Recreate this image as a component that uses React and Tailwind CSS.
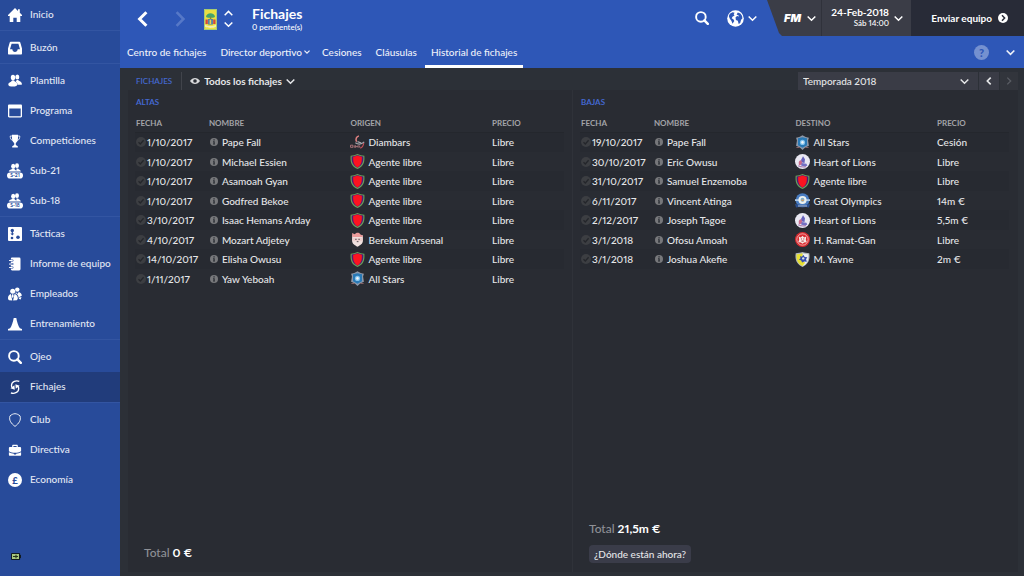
import React from "react";

const svgProps = { viewBox: "0 0 14 14", fill: "currentColor", "aria-hidden": true };

const People = () => (
  <>
    <ellipse cx="9.3" cy="3" rx="2" ry="2.5" />
    <path d="M8.6 6h1.6c.4 1 3 1.3 3.6 3.2v1.6H9.5C9.6 9 8.3 8.2 7.6 7.8c.6-.4.9-1 1-1.8z" />
    <ellipse cx="5" cy="3.6" rx="2.2" ry="2.8" />
    <path d="M3.9 6.600h2.300c.4 1.400 3 1.700 3.200 3.600.1 1.600-1.900 2.300-4.400 2.300S.200 12 .3 10.400c.2-2 3.200-2.200 3.600-3.800z" />
  </>
);

const Squad = ({ label }) => (
  <svg viewBox="0 0 16 16" fill="currentColor" className="h-4 w-4" aria-hidden="true">
    <ellipse cx="10" cy="2.700" rx="2" ry="2.400" />
    <ellipse cx="6.200" cy="3.300" rx="2.100" ry="2.500" />
    <path d="M5.300 5.600h2c.3 1.200 1.200 1.500 2 2 .4-.7.200-1.600.1-2.200h1.700c.4 1.200 2.700 1.400 2.800 3.200H1.800c.2-1.900 3-1.600 3.500-3z" />
    <rect x="0" y="9.400" width="16" height="6.200" rx="3.100" />
    <text x="8" y="14.300" textAnchor="middle" fontSize="5" fontWeight="700" fill="#284b9a">{label}</text>
  </svg>
);

const icons = {
  home: (
    <svg {...svgProps} className="h-[14px] w-[14px]">
      <path d="M7 0l3 2.900V1.300h1.800v3.400L14 7v.9h-1.700V14H8.700V9.700H5.300V14H1.700V7.900H0V7z" />
    </svg>
  ),
  inbox: (
    <svg {...svgProps} className="h-[14px] w-[14px]">
      <path fillRule="evenodd" d="M2.700.7h8.600c.5 0 .9.3 1 .8L14 7.600v4.900c0 .6-.4 1-1 1H1c-.6 0-1-.4-1-1V7.600l1.700-6.100c.1-.5.5-.8 1-.8zM3.600 2.700L2 8.300h2.300c.3 1.800 1.200 2.700 2.700 2.700s2.400-.9 2.700-2.700H12l-1.600-5.600z" />
    </svg>
  ),
  squad: (
    <svg {...svgProps} className="h-[14px] w-[14px]"><People /></svg>
  ),
  calendar: (
    <svg {...svgProps} className="h-[14px] w-[14px]">
      <path fillRule="evenodd" d="M1.200.5h11.600c.7 0 1.200.5 1.200 1.200v10.600c0 .7-.5 1.200-1.200 1.200H1.200c-.7 0-1.200-.5-1.200-1.200V1.700C0 1 .5.500 1.200.5zM1.300 4.500v7.700h11.400V4.500z" />
    </svg>
  ),
  trophy: (
    <svg {...svgProps} className="h-[14px] w-[14px]">
      <path d="M4 .8h6v3.500C10 6.800 8.900 8.300 7.800 9v2l2 1.200v1.300H4.200v-1.300l2-1.200V9C5.100 8.300 4 6.800 4 4.300z" />
      <path d="M4 2H2.200c0 2.500.8 4 2.500 4.600M10 2h1.800c0 2.500-.8 4-2.500 4.600" fill="none" stroke="currentColor" strokeWidth=".8" />
    </svg>
  ),
  s21: <Squad label="S-21" />,
  s18: <Squad label="S-18" />,
  tactics: (
    <svg {...svgProps} className="h-[14px] w-[14px]">
      <rect width="14" height="14" rx="1" />
      <g fill="#284b9a">
        <circle cx="4.300" cy="3.500" r="1.700" />
        <path d="M3.700 5h1.200v1.400h1.300L4.300 8.600 2.400 6.400h1.300z" />
        <circle cx="4" cy="11" r="1.300" />
        <circle cx="10" cy="10.300" r="1.800" />
      </g>
    </svg>
  ),
  notebook: (
    <svg {...svgProps} className="h-[14px] w-[14px]">
      <rect x="2.800" y=".6" width="9.700" height="12.800" rx="1.300" />
      <g fill="none" strokeLinecap="round">
        <path d="M2 3.500h2.500M2 7h2.500M2 10.500h2.500" stroke="#284b9a" strokeWidth="2" />
        <path d="M1.500 3.500h2.800M1.500 7h2.800M1.500 10.500h2.800" stroke="currentColor" strokeWidth="1.100" />
      </g>
    </svg>
  ),
  staff: (
    <svg {...svgProps} className="h-[14px] w-[14px]">
      <circle cx="9.300" cy="2.600" r="2.200" />
      <path d="M7.900 5l1.400 2 1.500-2c1.500.6 3 1.500 3 3.800l-3.300 1.800c0-2-1.200-3.400-3-4z" />
      <circle cx="4.700" cy="4.200" r="2.500" />
      <path d="M2.900 6.900L4.300 13.500 1 13.200C.3 12.800 0 12 0 11c0-2.300 1.300-3.500 2.900-4.100zM6.500 6.900c2 .6 3.300 2 3.300 4.100 0 1-.3 1.800-1 2.200l-3.700.3zM4.100 7.300h1.200l.4 2-1 2-1-2zM10.500 10.700l3-.8-.8 2.700-1.500-.5z" />
    </svg>
  ),
  cone: (
    <svg {...svgProps} className="h-[14px] w-[14px]">
      <path d="M5.700 1h2.600c.6 3.700 1.900 7.800 3.600 10.300l2.100.8v1.400H0v-1.400l2.100-.8C3.800 8.800 5.100 4.700 5.700 1z" />
    </svg>
  ),
  search: (
    <svg {...svgProps} className="h-[14px] w-[14px]">
      <g fill="none" stroke="currentColor">
        <circle cx="5.900" cy="5.900" r="4.800" strokeWidth="1.900" />
        <path d="M9.400 9.400l3.400 3.400" strokeWidth="2.500" strokeLinecap="round" />
      </g>
    </svg>
  ),
  transfer: (
    <svg {...svgProps} className="h-[14px] w-[14px]">
      <path d="M11.300 1.400C8.300-.1 3.700 1.500 3.500 5.300c0 1 .1 1.500.5 2.200M2.900 12.800c3 1.300 7.700-.3 7.800-4.100 0-1-.1-1.600-.5-2.300" fill="none" stroke="currentColor" strokeWidth="1.300" />
      <path d="M2.500 8.300l4.300 1.400L6.400 5.200zM11.700 5.700L7.400 4.300l.4 4.500z" />
    </svg>
  ),
  shield: (
    <svg {...svgProps} className="h-[14px] w-[14px]">
      <path d="M7 .7c1.900.1 3.500.9 5 2.200 1.400 4.200-1.200 7.700-5 10.500C3.200 10.600.6 7.100 2 2.900 3.500 1.600 5.100.8 7 .7z" fill="none" stroke="currentColor" strokeWidth=".9" />
    </svg>
  ),
  briefcase: (
    <svg {...svgProps} className="h-[14px] w-[14px]">
      <path fillRule="evenodd" d="M4.200 4V2.800c0-.6.400-1 1-1h3.600c.6 0 1 .4 1 1V4h2.400c.5 0 .9.400.9.900v3.300C9.500 10.400 4.500 10.400.9 8.200V4.900c0-.5.4-.9.900-.9zM5.400 3v1h3.200V3z" />
      <path d="M.9 9.300c1.600.9 3.300 1.400 5 1.500v.8h2.200v-.8c1.700-.1 3.400-.6 5-1.500v2.500c0 .6-.4 1-1 1H1.900c-.6 0-1-.4-1-1z" />
    </svg>
  ),
  pound: (
    <svg {...svgProps} className="h-[14px] w-[14px]">
      <circle cx="7" cy="7" r="7" />
      <text x="7" y="10.500" textAnchor="middle" fontSize="9.500" fontWeight="900" fill="#284b9a">£</text>
    </svg>
  ),
};

const menu = [
  [["home", "Inicio"]],
  [["inbox", "Buzón"]],
  [["squad", "Plantilla"], ["calendar", "Programa"], ["trophy", "Competiciones"], ["s21", "Sub-21"], ["s18", "Sub-18"]],
  [["tactics", "Tácticas"], ["notebook", "Informe de equipo"], ["staff", "Empleados"], ["cone", "Entrenamiento"]],
  [["search", "Ojeo"], ["transfer", "Fichajes"]],
  [["shield", "Club"], ["briefcase", "Directiva"], ["pound", "Economía"]],
];

function Chevron({ dir = "down", className = "h-2 w-2", width = 1.6 }) {
  const paths = {
    down: "M.6 2.200L4 5.600l3.400-3.400",
    up: "M.6 5.500L4 2.100l3.400 3.400",
    left: "M5.700.6L2.300 4l3.400 3.400",
    right: "M2.300.6L5.700 4 2.300 7.400",
  };
  return (
    <svg viewBox="0 0 8 8" className={className} fill="none" stroke="currentColor" strokeWidth={width} aria-hidden="true">
      <path d={paths[dir]} />
    </svg>
  );
}

const crests = {
  free: (
    <>
      <path d="M7 0c2 .9 4.200 1.400 6.400 1.600C13.900 7.500 12.800 11.500 7 14 1.200 11.500.1 7.500.6 1.600 2.800 1.400 5 .9 7 0z" fill="#6aa05a" />
      <path d="M7 1c1.800.8 3.600 1.200 5.400 1.400.3 5-.8 8.300-5.400 10.500C2.400 10.700 1.300 7.400 1.600 2.400 3.400 2.200 5.200 1.800 7 1z" fill="#4c1a78" />
      <path d="M7 1.400c1.300.6 2.700 1 4 1.200.3 4.800-.4 7.800-4 9.900-3.600-2.100-4.300-5.100-4-9.900 1.300-.2 2.700-.6 4-1.200z" fill="#fb1420" />
    </>
  ),
  diambars: (
    <>
      <path d="M8.300.8C6 1.500 4.800 4 6.200 6.300" fill="none" stroke="#e08282" strokeWidth="1.400" />
      <path d="M5 7.300c2.500 1.600 6 1.300 8.300-.9M7 6.200l3.500 1.300" fill="none" stroke="#a9abb2" strokeWidth="1.100" />
      <path d="M12.800 7.500c-.3 2.600-1.500 4.300-3.300 4.800" fill="none" stroke="#c05058" strokeWidth="1.100" />
      <path d="M.5 9.500h2.200v2H.5zM4 9.700v2.200M5.200 11.900V9.800l1.200 1.500 1.200-1.500v2.100M9 9.800v2" fill="none" stroke="#b77a80" strokeWidth=".8" />
    </>
  ),
  berekum: (
    <>
      <path d="M2 3c3 .8 7 .8 10 0v5.500c0 2.600-2.400 4-5 5.300-2.600-1.300-5-2.700-5-5.300z" fill="#f0e1df" />
      <path d="M2 4.600V1l2.400 1.200C5.500.200 8.500.200 9.500 2L12 3.400v1.200z" fill="#eb9b9b" />
      <path d="M2.300 5.500h9.400v3H2.300z" fill="#ecd0cf" />
      <path d="M4.800 6.800h1.400M7.800 6.800h1.400M6.300 9h1.600" stroke="#55484e" strokeWidth=".9" />
    </>
  ),
  stars: (
    <>
      <path d="M1 2.500L4 1.800 7 .2l3 1.600 3 .7-.8 2.600.8 5-3.500 1.500L7 13.900l-2.500-2.300L1 10.100l.8-5z" fill="#8d98a9" />
      <path d="M2.800 3L7 2l4.200 1v6.500L7 12 2.800 9.500z" fill="#2979b5" />
      <circle cx="7" cy="6.900" r="2.400" fill="#83c3ee" />
      <circle cx="7" cy="6.900" r="1.200" fill="#f1f5f7" />
      <path d="M1.300 11.700h3M9.700 11.700h3" stroke="#846064" strokeWidth="1" />
    </>
  ),
  lions: (
    <>
      <circle cx="7" cy="7" r="7" fill="#e9e8f2" />
      <path d="M7.500 2l1.800 3-.4 3.300-3.600-.5.700-3z" fill="#6661bb" />
      <path d="M3.500 7.500c1.300-2.500 2.600-1.600 3 0l.5 2.300-3.400.6z" fill="#c96a8b" />
      <path d="M6.200 8.500l4.500.5.8 2-3 .7-2.800-1z" fill="#7470c3" />
      <path d="M3 11c2 1 4.500 1.400 7.300.8" fill="none" stroke="#a57caf" strokeWidth="1" />
    </>
  ),
  olympics: (
    <>
      <circle cx="7" cy="6.600" r="6.400" fill="#497cc0" />
      <path d="M0 10.300l3 .4c2.400 1 5.600 1 8 0l3-.4-1 3.300-3-.6c-2 .6-4 .6-6 0l-3 .6z" fill="#294e8e" />
      <path d="M0 5.800h14v1.700H0z" fill="#acc9e6" />
      <circle cx="7" cy="6.500" r="3.800" fill="#eef2ef" />
      <circle cx="7" cy="6.300" r="1.800" fill="#78add4" />
      <path d="M6 6h2.200v1.600H6z" fill="#d4a168" />
      <path d="M2.800 12.100h8.400" stroke="#c8d5e7" strokeWidth=".8" />
    </>
  ),
  ramat: (
    <>
      <circle cx="7" cy="7" r="7" fill="#d92b31" />
      <circle cx="7" cy="7" r="5.300" fill="none" stroke="#f2b9b6" strokeWidth=".8" />
      <path d="M3.500 4.300l2 .8L7 3.500l1.500 1.600 2-.8-.4 3L11 9.500l-2.500.2L7 11 5.500 9.700 3 9.500l.9-2.200z" fill="#f6e8e4" />
      <path d="M5.500 6.500h1M7.700 6.500h1M6 8.500h2.200" stroke="#af343a" strokeWidth=".9" />
    </>
  ),
  yavne: (
    <>
      <path d="M7 0c2 .8 4 1 6.300 1.100C14.300 7 12.500 11.500 7 14 1.500 11.500-.3 7 .7 1.100 3 1 5 .8 7 0z" fill="#b3b9bd" />
      <path d="M7 1.100c1.600.6 3.500.9 5.400 1C13 7 11.500 11 7 13z" fill="#ebeef2" />
      <path d="M7 1.100c-1.600.6-3.500.9-5.400 1C1 7 2.500 11 7 13l2.500-3L7 8z" fill="#e6df35" />
      <path d="M4.800 3.800l1.500.6L8 2.800l1 1.800 2.500.2-1.200 2 .8 2.400-2.500-.4-2 1.100-.8-2L3.600 7l1.500-1z" fill="#334bad" />
      <circle cx="7.700" cy="6" r="1.100" fill="#dce4e5" />
    </>
  ),
};

const arrivals = [
  ["1/10/2017", "Pape Fall", "diambars", "Diambars", "Libre"],
  ["1/10/2017", "Michael Essien", "free", "Agente libre", "Libre"],
  ["1/10/2017", "Asamoah Gyan", "free", "Agente libre", "Libre"],
  ["1/10/2017", "Godfred Bekoe", "free", "Agente libre", "Libre"],
  ["3/10/2017", "Isaac Hemans Arday", "free", "Agente libre", "Libre"],
  ["4/10/2017", "Mozart Adjetey", "berekum", "Berekum Arsenal", "Libre"],
  ["14/10/2017", "Elisha Owusu", "free", "Agente libre", "Libre"],
  ["1/11/2017", "Yaw Yeboah", "stars", "All Stars", "Libre"],
];

const departures = [
  ["19/10/2017", "Pape Fall", "stars", "All Stars", "Cesión"],
  ["30/10/2017", "Eric Owusu", "lions", "Heart of Lions", "Libre"],
  ["31/10/2017", "Samuel Enzemoba", "free", "Agente libre", "Libre"],
  ["6/11/2017", "Vincent Atinga", "olympics", "Great Olympics", "14m €"],
  ["2/12/2017", "Joseph Tagoe", "lions", "Heart of Lions", "5,5m €"],
  ["3/1/2018", "Ofosu Amoah", "ramat", "H. Ramat-Gan", "Libre"],
  ["3/1/2018", "Joshua Akefie", "yavne", "M. Yavne", "2m €"],
];

function TransferTable({ title, place, rows }) {
  return (
    <>
      <h2 className="pl-px text-[8px] font-bold leading-4 text-[#4468d0]">{title}</h2>
      <table className="mt-1 w-full table-fixed border-collapse text-left">
        <thead>
          <tr className="h-[18px] border-b border-[#24272d] text-[8px] text-[#a3a4a8]">
            <th className="w-[17%] p-0 pl-px font-bold">FECHA</th>
            <th className="w-[33%] p-0 pl-px font-bold">NOMBRE</th>
            <th className="w-[33%] p-0 pl-px font-bold">{place}</th>
            <th className="w-[17%] p-0 pl-px font-bold">PRECIO</th>
          </tr>
        </thead>
        <tbody className="text-[10px] leading-4 text-[#e6e7e9]">
          {rows.map(([date, name, crest, club, price], i) => (
            <tr key={i} className="odd:h-5 odd:bg-[#272a31] even:h-[19px]">
              <td className="p-0 pl-px">
                <span className="flex items-center gap-px">
                  <svg viewBox="0 0 10 10" className="h-[10px] w-[10px] shrink-0" aria-hidden="true">
                    <circle cx="5" cy="5" r="5" fill="#3c3e42" />
                    <path d="M2.500 5.200l1.800 1.800 3.300-3.700" fill="none" stroke="#24262b" strokeWidth="1.300" />
                  </svg>
                  {date}
                </span>
              </td>
              <td className="p-0 pl-px">
                <span className="flex items-center gap-1 pl-px">
                  <svg viewBox="0 0 8 8" className="h-2 w-2 shrink-0" aria-hidden="true">
                    <circle cx="4" cy="4" r="4" fill="#77787b" />
                    <path d="M3.400 1.300h1.300v1.200H3.400zM3 3.200h1.700v2.500H5v.9H3v-.9h.4V4.100H3z" fill="#292c33" />
                  </svg>
                  <a href="#jugador">{name}</a>
                </span>
              </td>
              <td className="p-0 pl-px">
                <span className="flex items-center gap-[3px]">
                  <svg viewBox="0 0 14 14" className="h-[15px] w-[15px] shrink-0" aria-hidden="true">{crests[crest]}</svg>
                  <a href="#club">{club}</a>
                </span>
              </td>
              <td className="p-0 pl-px">{price}</td>
            </tr>
          ))}
        </tbody>
      </table>
    </>
  );
}

function Sidebar() {
  return (
    <nav className="flex w-[120px] shrink-0 flex-col bg-[#284b9a] text-[10px] text-[#e3e8f4]">
      {menu.map((group, i) => (
        <ul key={i} className="mb-[2px] border-b border-[#3355a2] last-of-type:border-0">
          {group.map(([icon, label]) => (
            <li key={label}>
              <a
                href={"#" + icon}
                aria-current={label === "Fichajes" ? "page" : undefined}
                className="flex h-[30px] items-center gap-[7px] pl-[7px] aria-[current=page]:bg-[#213c7b]"
              >
                <span className="flex w-4 justify-center text-white">{icons[icon]}</span>
                <span className="pb-0.5">{label}</span>
              </a>
            </li>
          ))}
        </ul>
      ))}
      <svg viewBox="0 0 10 7" className="mb-4 ml-[11px] mt-auto h-[7px] w-[10px]" aria-hidden="true">
        <rect width="9.200" height="7" rx="1" fill="#121a20" />
        <rect x="9" y="2" width="1" height="3" fill="#121a20" />
        <rect x="1" y="1" width="7" height="5" fill="#a8c77e" />
        <path d="M2 3.500h5M5 1.700v3.600" stroke="#26331c" strokeWidth="1.100" />
      </svg>
    </nav>
  );
}

function Header() {
  return (
    <header className="bg-[#2e57b7] text-white">
      <div className="flex h-9 items-stretch">
        <div className="flex items-center">
          <button aria-label="Atrás" className="ml-[15px] mt-0.5"><Chevron dir="left" className="h-4 w-4" width={1.500} /></button>
          <button aria-label="Adelante" disabled className="ml-[21px] mt-0.5 text-[#5678c7]"><Chevron dir="right" className="h-4 w-4" width={1.300} /></button>
          <svg viewBox="0 0 13 21" className="ml-4 mt-0.5 h-[21px] w-[13px]" aria-hidden="true">
            <rect width="13" height="21" fill="#a8cc72" />
            <rect x="1" y="1" width="11" height="19" fill="#eadf43" />
            <path d="M2 8c.3-5 8.700-5 9 0-2 1.200-3 .4-4.500.4S4 9.200 2 8z" fill="#43a56c" />
            <path d="M5.800 7.500h1.500v4H5.800z" fill="#7e873c" />
            <path d="M1.500 10.500h2.300V15H1.500zM9.200 10.500h2.300V15H9.200z" fill="#d2473f" />
            <path d="M4.200 10h4.600v5.500H4.200z" fill="#326ebf" />
            <path d="M5.500 10.500h1.800V15H5.500z" fill="#e7d44a" />
            <path d="M1 15.500c3 2 8 2 11 0v2.200c-3 1.600-8 1.600-11 0z" fill="#f0efb3" />
          </svg>
          <div className="ml-[7px] mt-0.5 flex flex-col gap-[2px]">
            <button aria-label="Equipo anterior"><Chevron dir="up" className="h-[9px] w-[9px]" width={1.300} /></button>
            <button aria-label="Equipo siguiente"><Chevron className="h-[9px] w-[9px]" width={1.300} /></button>
          </div>
          <div className="ml-[19px] mt-px">
            <h1 className="text-[14px] font-bold leading-4">Fichajes</h1>
            <p className="text-[8px] leading-[10px]">0 pendiente(s)</p>
          </div>
        </div>
        <div className="ml-auto flex items-center">
          <button aria-label="Buscar">{icons.search}</button>
          <button aria-label="Mundo" className="ml-[18px] flex items-center gap-1">
            <svg viewBox="0 0 17 17" className="h-[17px] w-[17px]" aria-hidden="true">
              <circle cx="8.500" cy="8.500" r="8.300" fill="white" />
              <path d="M2.800 3.800L5.600 2.200l2 .6-.9 1.500.8 1.100-2 1.300L4.700 8.200l1.900 1.200.7 1.600-1.800 2.800-1-2.800-1.800-2.400-.9-2.500zM9.600 4.600l1.200-2.200 2.600 1 1.700 2.700.3 2.500-1.300 1.200-.9 3.100-1.500 1.200-.9-3.400-1.900-.8-.4-2.300 1.500-1.500 2.100.4-.5-1.100z" fill="#2e57b7" />
            </svg>
            <Chevron className="h-[9px] w-[9px]" width={1.300} />
          </button>
        </div>
        <div className="ml-[10px] flex items-stretch bg-[#3b3d47] [clip-path:polygon(0_0,100%_0,100%_100%,15px_100%,12px_92%)]">
          <button aria-label="Menú FM" className="flex w-[55px] items-center justify-end gap-[6px] border-r border-[#30323b] pr-[5px]">
            <span className="font-[Inter,sans-serif] text-[11px] font-black italic">FM</span>
            <Chevron className="h-[9px] w-[9px]" width={1.300} />
          </button>
          <button className="flex w-[89px] items-center justify-end gap-[5px] pr-2 text-right">
            <span className="pb-0.5">
              <span className="block text-[10px] font-bold leading-3">24-Feb-2018</span>
              <span className="block text-[8px] font-medium leading-[11px]">Sáb 14:00</span>
            </span>
            <Chevron className="h-[9px] w-[9px]" width={1.300} />
          </button>
          <button className="flex w-[113px] items-center justify-end gap-[6px] bg-[#282b37] pr-4 text-[10px] font-bold">
            Enviar equipo
            <svg viewBox="0 0 10 10" className="h-[10px] w-[10px]" aria-hidden="true">
              <circle cx="5" cy="5" r="5" fill="white" />
              <path d="M4 2.300L6.600 5 4 7.700" fill="none" stroke="#282b37" strokeWidth="1.500" />
            </svg>
          </button>
        </div>
      </div>
      <nav className="flex h-8 items-stretch pl-[7px] text-[10px] text-[#eef1f9]">
        <a href="#centro" className="mr-[14px] flex items-center">Centro de fichajes</a>
        <a href="#director" className="mr-3 flex items-center gap-0.5">Director deportivo <Chevron className="h-[6px] w-[6px]" /></a>
        <a href="#cesiones" className="mr-[14px] flex items-center">Cesiones</a>
        <a href="#clausulas" className="mr-2 flex items-center">Cláusulas</a>
        <a href="#historial" aria-current="page" className="flex items-center border-b-[3px] border-white px-[6px] pt-[3px]">Historial de fichajes</a>
        <button aria-label="Ayuda" className="ml-auto">
          <svg viewBox="0 0 15 15" className="h-[15px] w-[15px]" aria-hidden="true">
            <circle cx="7.500" cy="7.500" r="7.500" fill="#7591d0" />
            <text x="7.500" y="11.500" textAnchor="middle" fontSize="11" fontWeight="900" fill="#2e57b7">?</text>
          </svg>
        </button>
        <button aria-label="Más" className="ml-[17px] mr-[9px]"><Chevron className="h-[9px] w-[9px]" width={1.500} /></button>
      </nav>
    </header>
  );
}

export default function App() {
  return (
    <div className="flex min-h-screen bg-[#2c3037] font-['Lato',sans-serif] font-medium proportional-nums">
      <Sidebar />
      <div className="flex min-w-0 flex-1 flex-col">
        <Header />
        <div className="flex h-[22px] items-end pl-4 pr-[6px] text-[10px]">
          <span className="mr-[9px] flex h-[18px] items-center text-[8px] font-semibold text-[#4468d0]">FICHAJES</span>
          <label className="flex h-[18px] items-center gap-1 border-l border-[#41444b] pl-2 text-[#e6e7e9]">
            <svg viewBox="0 0 10 8" className="h-2 w-[10px]" aria-hidden="true">
              <path d="M0 4c2.500-4 7.500-4 10 0-2.500 4-7.500 4-10 0z" fill="#d9dadc" />
              <circle cx="5" cy="4" r="1.800" fill="#2c3037" />
            </svg>
            <select aria-label="Filtro de fichajes" className="appearance-none bg-transparent font-bold">
              <option>Todos los fichajes</option>
            </select>
            <Chevron className="h-[9px] w-[9px]" width={1.300} />
          </label>
          <div className="ml-auto flex h-[18px] gap-px text-[#e6e7e9]">
            <label className="flex w-[180px] items-center bg-[#3a3c46] px-[5px]">
              <select aria-label="Temporada" className="flex-1 appearance-none bg-transparent proportional-nums">
                <option>Temporada 2018</option>
              </select>
              <Chevron className="mr-1 h-[9px] w-[9px]" width={1.300} />
            </label>
            <button aria-label="Temporada anterior" className="flex w-5 items-center justify-center bg-[#3a3c46]"><Chevron dir="left" className="h-2 w-2" /></button>
            <button aria-label="Temporada siguiente" disabled className="flex w-[18px] items-center justify-center bg-[#32353c] text-[#5a5d64]"><Chevron dir="right" className="h-2 w-2" width={1.300} /></button>
          </div>
        </div>
        <main className="mb-1 ml-2 mr-[6px] grid flex-1 grid-cols-2 bg-[#292c33]">
          <section className="flex flex-col border-r border-[#2f3239] pl-[7px] pr-2 pt-1">
            <TransferTable title="ALTAS" place="ORIGEN" rows={arrivals} />
            <p className="mb-[11px] ml-[9px] mt-auto text-[12px] leading-4 text-[#8e9096]">Total <strong className="font-bold text-white">0 €</strong></p>
          </section>
          <section className="flex flex-col pl-[7px] pr-[9px] pt-1">
            <TransferTable title="BAJAS" place="DESTINO" rows={departures} />
            <div className="mb-[9px] ml-[9px] mt-auto">
              <p className="mb-2 text-[12px] leading-4 text-[#8e9096]">Total <strong className="font-bold text-white">21,5m €</strong></p>
              <button className="block h-[18px] rounded-sm bg-[#3a3c49] px-[5px] text-[10px] text-[#e6e7e9]">¿Dónde están ahora?</button>
            </div>
          </section>
        </main>
      </div>
    </div>
  );
}
